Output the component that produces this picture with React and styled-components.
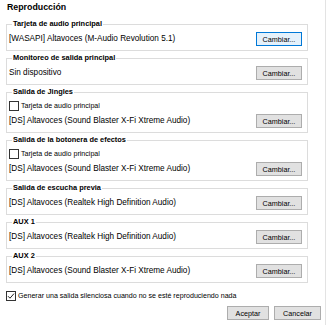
import styled, { createGlobalStyle } from 'styled-components';

const GlobalStyle = createGlobalStyle`
    html, body {
        margin: 0;
        padding: 0;
        background: #ffffff;
    }
    body {
        font-family: "Liberation Sans", Arial, sans-serif;
        color: #000000;
    }
`;

const groups = [
    { title: 'Tarjeta de audio principal', device: '[WASAPI] Altavoces (M-Audio Revolution 5.1)', focused: true },
    { title: 'Monitoreo de salida principal', device: 'Sin dispositivo' },
    { title: 'Salida de Jingles', device: '[DS] Altavoces (Sound Blaster X-Fi Xtreme Audio)', option: true },
    { title: 'Salida de la botonera de efectos', device: '[DS] Altavoces (Sound Blaster X-Fi Xtreme Audio)', option: true },
    { title: 'Salida de escucha previa', device: '[DS] Altavoces (Realtek High Definition Audio)' },
    { title: 'AUX 1', device: '[DS] Altavoces (Realtek High Definition Audio)' },
    { title: 'AUX 2', device: '[DS] Altavoces (Sound Blaster X-Fi Xtreme Audio)' },
];

function CheckBox({ checked, children }) {
    return (
        <CheckRow>
            <Box>
                {checked && (
                    <svg width="8" height="8" viewBox="0 0 8 8">
                        <polyline points="1,4.2 3,6.2 7,1.6" fill="none" stroke="#222" strokeWidth="1" />
                    </svg>
                )}
            </Box>
            <span>{children}</span>
        </CheckRow>
    );
}

function App() {
    return (
        <>
            <GlobalStyle />
            <Panel>
                <Title>Reproducción</Title>
                <GroupList>
                    {groups.map((g) => (
                        <Group key={g.title}>
                            <Legend>{g.title}</Legend>
                            {g.option && <CheckBox>Tarjeta de audio principal</CheckBox>}
                            <DeviceRow>
                                <Device>{g.device}</Device>
                                <Button $focused={g.focused} $width={46}>Cambiar...</Button>
                            </DeviceRow>
                        </Group>
                    ))}
                </GroupList>
                <Silent>
                    <CheckBox checked>Generar una salida silenciosa cuando no se esté reproduciendo nada</CheckBox>
                </Silent>
                <Footer>
                    <Button $width={42}>Aceptar</Button>
                    <Button $width={47}>Cancelar</Button>
                </Footer>
            </Panel>
        </>
    );
}

const Panel = styled.div`
    width: 326px;
    height: 325px;
    box-sizing: border-box;
    padding: 0 4px 0 6px;
    border-right: 1px solid #e3e3e3;
    display: flex;
    flex-direction: column;
`;

const Title = styled.div`
    font-weight: 700;
    font-size: 8.8px;
    line-height: 14px;
    padding-left: 1px;
    margin-bottom: 5px;
`;

const GroupList = styled.div`
    display: flex;
    flex-direction: column;
    gap: 2px;
`;

const Group = styled.fieldset`
    margin: 0;
    width: 302px;
    box-sizing: border-box;
    min-inline-size: 0;
    border: 1px solid #dcdcdc;
    padding: 3px 5px 4px 1px;
`;

const Legend = styled.legend`
    font-weight: 700;
    font-size: 7.4px;
    line-height: 10px;
    padding: 0 1px;
    margin-left: 4px;
`;

const DeviceRow = styled.div`
    display: flex;
    align-items: center;
    justify-content: space-between;
    height: 14px;
`;

const Device = styled.span`
    font-size: 8.2px;
    line-height: 14px;
    padding-left: 1px;
    color: #000;
    white-space: nowrap;
`;

const Button = styled.div`
    width: ${(p) => p.$width}px;
    height: 14px;
    box-sizing: border-box;
    display: flex;
    align-items: center;
    justify-content: center;
    font-size: 7.2px;
    color: #000;
    background: ${(p) => (p.$focused ? '#e5f1fb' : '#e1e1e1')};
    border: 1px solid ${(p) => (p.$focused ? '#0078d7' : '#adadad')};
`;

const CheckRow = styled.div`
    display: flex;
    align-items: center;
    gap: 2px;
    height: 12px;
    margin-bottom: 2px;
    padding-left: 1px;
    font-size: 7.1px;
    color: #000;
    white-space: nowrap;
`;

const Box = styled.span`
    width: 10px;
    height: 10px;
    box-sizing: border-box;
    border: 1px solid #333;
    background: #fff;
    display: flex;
    align-items: center;
    justify-content: center;
`;

const Silent = styled.div`
    margin-top: 7px;
    margin-left: -1px;
`;

const Footer = styled.div`
    display: flex;
    justify-content: flex-end;
    gap: 5px;
    margin-top: 2px;
`;

export default App;
